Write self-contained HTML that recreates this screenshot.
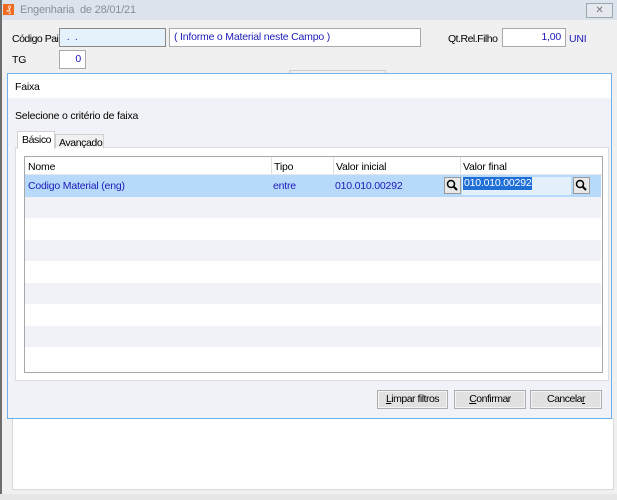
<!DOCTYPE html><html><head><style>
*{box-sizing:border-box;margin:0;padding:0}
body{width:617px;height:500px;position:relative;background:#f0f0f0;font-family:"Liberation Sans",sans-serif;font-size:10.5px;letter-spacing:-0.2px;color:#000;overflow:hidden}
.a{position:absolute;white-space:nowrap}
.in{position:absolute;border:1px solid #a8a8a8;background:#fff;height:19px;line-height:17px;padding:0 4px;color:#1a1ab8;white-space:nowrap}
.btn{position:absolute;border:1px solid #adadad;background:#e1e1e1;height:19px;line-height:17px;text-align:center;box-shadow:inset 0 0 0 1px #f4f4f4}
.row{position:absolute;left:25px;width:576px;height:21px}
.sb{position:absolute;width:17px;height:17px;border:1px solid #9a9a9a;background:#e8e8e8}
</style></head><body>
<div class="a" style="left:0;top:0;width:617px;height:20px;background:#dde3ec"></div>
<div class="a" style="left:0;top:0;width:2px;height:500px;background:#6d6d6d"></div>
<div class="a" style="left:3px;top:4px;width:11px;height:11px;background:#f06a20;color:#fff;font-size:9px;line-height:11px;text-align:center">₰</div>
<div class="a" style="left:20px;top:4px;color:#8a8f96;font-size:11px">Engenharia&nbsp; de 28/01/21</div>
<div class="a" style="left:586px;top:3px;width:27px;height:15px;border:1px solid #9aa;background:#e5e8ee;text-align:center;line-height:13px;color:#777;font-size:10px">✕</div>
<div class="a" style="left:12px;top:33px;letter-spacing:-0.5px">Código Pai</div>
<div class="in" style="left:59px;top:28px;width:107px;background:#e5f1fb;border-color:#888">&nbsp;.&nbsp;&nbsp;.</div>
<div class="in" style="left:169px;top:28px;width:252px">( Informe o Material neste Campo )</div>
<div class="a" style="left:448px;top:33px;letter-spacing:-0.5px">Qt.Rel.Filho</div>
<div class="in" style="left:502px;top:28px;width:64px;text-align:right">1,00</div>
<div class="a" style="left:569px;top:33px;color:#1a1ab8">UNI</div>
<div class="a" style="left:12px;top:54px">TG</div>
<div class="in" style="left:59px;top:50px;width:27px;text-align:right">0</div>
<div class="a" style="left:289px;top:70px;width:97px;height:4px;border:1px solid #ccc;border-bottom:none"></div>
<div class="a" style="left:12px;top:418px;width:602px;height:72px;background:#fff;border:1px solid #d8d8d8"></div>
<div class="a" style="left:7px;top:73px;width:605px;height:346px;border:1px solid #6fb0ec;background:#f1f2f7"></div>
<div class="a" style="left:8px;top:74px;width:603px;height:24px;background:#fff"></div>
<div class="a" style="left:15px;top:81px">Faixa</div>
<div class="a" style="left:15px;top:110px">Selecione o critério de faixa</div>
<div class="a" style="left:15px;top:147px;width:594px;height:234px;border:1px solid #dcdcdc;background:#fff"></div>
<div class="a" style="left:55px;top:134px;width:49px;height:14px;border:1px solid #d0d0d0;border-bottom:none;background:#f0f0f0;padding:2px 0 0 3px;letter-spacing:-0.4px">Avançado</div>
<div class="a" style="left:17px;top:131px;width:38px;height:18px;border:1px solid #d0d0d0;border-bottom:none;background:#fff;padding:2px 0 0 4px;letter-spacing:-0.4px">Básico</div>
<div class="a" style="left:24px;top:156px;width:579px;height:217px;border:1px solid #a8a8a8;background:#fff"></div>
<div class="a" style="left:25px;top:157px;width:577px;height:18px;background:#fff;border-bottom:1px solid #e6e6e6"></div>
<div class="a" style="left:271px;top:157px;width:1px;height:18px;background:#e0e0e0"></div>
<div class="a" style="left:333px;top:157px;width:1px;height:18px;background:#e0e0e0"></div>
<div class="a" style="left:460px;top:157px;width:1px;height:18px;background:#e0e0e0"></div>
<div class="a" style="left:28px;top:161px">Nome</div>
<div class="a" style="left:274px;top:161px">Tipo</div>
<div class="a" style="left:336px;top:161px">Valor inicial</div>
<div class="a" style="left:463px;top:161px">Valor final</div>
<div class="row" style="top:175px;height:22px;background:#b8dafa"></div>
<div class="row" style="top:197px;background:#f1f2f7"></div>
<div class="row" style="top:240px;background:#f1f2f7"></div>
<div class="row" style="top:283px;background:#f1f2f7"></div>
<div class="row" style="top:326px;background:#f1f2f7"></div>
<div class="a" style="left:28px;top:180px;color:#1a1ab8">Codigo Material (eng)</div>
<div class="a" style="left:273px;top:180px;color:#1a1ab8">entre</div>
<div class="a" style="left:335px;top:180px;color:#1a1ab8">010.010.00292</div>
<div class="sb" style="left:444px;top:177px"><svg width="15" height="15"><circle cx="6" cy="6" r="3.5" fill="none" stroke="#000" stroke-width="1.5"/><path d="M8.5 8.5L12 12" stroke="#000" stroke-width="2"/></svg></div>
<div class="a" style="left:462px;top:177px;width:109px;height:18px;background:#e3f0fc"></div>
<div class="a" style="left:463px;top:177px;background:#1f6fd6;color:#fff;padding:0 1px;line-height:13px">010.010.00292</div>
<div class="sb" style="left:573px;top:177px"><svg width="15" height="15"><circle cx="6" cy="6" r="3.5" fill="none" stroke="#000" stroke-width="1.5"/><path d="M8.5 8.5L12 12" stroke="#000" stroke-width="2"/></svg></div>
<div class="btn" style="left:377px;top:390px;width:71px;letter-spacing:-0.5px"><u>L</u>impar filtros</div>
<div class="btn" style="left:454px;top:390px;width:72px;letter-spacing:-0.5px"><u>C</u>onfirmar</div>
<div class="btn" style="left:530px;top:390px;width:72px;letter-spacing:-0.5px">Cancela<u>r</u></div>
<div class="a" style="left:0;top:494px;width:617px;height:6px;background:#e6e6e6"></div>
</body></html>
